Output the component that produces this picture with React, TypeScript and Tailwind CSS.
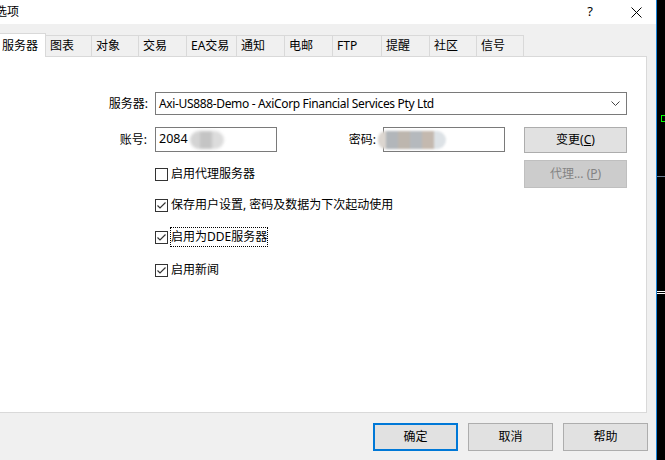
import type { ReactNode } from 'react'

const tabs = [
  { label: '图表', w: 'w-[47px]' },
  { label: '对象', w: 'w-[48px]' },
  { label: '交易', w: 'w-[49px]' },
  { label: 'EA交易', w: 'w-[51px]' },
  { label: '通知', w: 'w-[49px]' },
  { label: '电邮', w: 'w-[49px]' },
  { label: 'FTP', w: 'w-[50px]' },
  { label: '提醒', w: 'w-[49px]' },
  { label: '社区', w: 'w-[48px]' },
  { label: '信号', w: 'w-[48px]' },
]

function Checkbox({ checked, focused, children }: { checked?: boolean; focused?: boolean; children: ReactNode }) {
  return (
    <div className="flex items-center h-[20px] pl-[155px]">
      <div className="w-[13px] h-[13px] border border-[#333333] bg-white flex items-center justify-center">
        {checked && (
          <svg width="11" height="11" viewBox="0 0 11 11">
            <polyline points="1.5,5.5 4,8 9.5,2.5" fill="none" stroke="#333333" strokeWidth="1.2" />
          </svg>
        )}
      </div>
      <span
        className={
          'ml-[2px] border leading-[18px] text-[12px] text-[#000]' +
          (focused ? ' border-dotted border-black' : ' border-transparent')
        }
      >
        {children}
      </span>
    </div>
  )
}

function Button({
  children,
  focused,
  disabled,
  className = '',
}: {
  children: ReactNode
  focused?: boolean
  disabled?: boolean
  className?: string
}) {
  return (
    <div
      className={
        'flex items-center justify-center text-[12px] ' +
        (focused
          ? 'border-2 border-[#0078d7] bg-[#e1e1e1] text-black '
          : disabled
            ? 'border border-[#bfbfbf] bg-[#cccccc] text-[#838383] '
            : 'border border-[#adadad] bg-[#e1e1e1] text-black ') +
        className
      }
    >
      {children}
    </div>
  )
}

export default function App() {
  return (
    <div
      className="w-[665px] h-[460px] flex bg-black overflow-hidden"
      style={{ fontFamily: '"Noto Sans", "Noto Sans CJK SC", sans-serif' }}
    >
      <div className="w-[656px] h-full flex flex-col bg-[#f0f0f0]">
        {/* title bar */}
        <div className="h-[24px] bg-white flex items-center shrink-0">
          <span className="-ml-[5px] text-[12px] text-black">选项</span>
          <span className="ml-auto text-[13px] text-black mr-[38px]">?</span>
          <svg width="11" height="11" viewBox="0 0 11 11" className="mr-[14px]">
            <path d="M0.5 0.5 L10.5 10.5 M10.5 0.5 L0.5 10.5" stroke="#000" strokeWidth="1" />
          </svg>
        </div>

        <div className="flex-1 flex flex-col pt-[9px]">
          {/* tabs */}
          <div className="h-[23px] flex items-end shrink-0">
            <div className="relative z-10 -ml-[2px] w-[48px] h-[24px] -mb-px bg-white border-t border-r border-[#d9d9d9] flex items-center pl-[4px] text-[12px] text-black">
              服务器
            </div>
            {tabs.map((t) => (
              <div
                key={t.label}
                className={`${t.w} h-[21px] -ml-px bg-[#f0f0f0] border-t border-l border-r border-[#d9d9d9] flex items-center pl-[4px] text-[12px] text-black`}
              >
                {t.label}
              </div>
            ))}
          </div>

          {/* panel */}
          <div className="-ml-px w-[648px] h-[357px] bg-white border border-[#d9d9d9] pt-[35px] shrink-0">
            <div className="flex items-center h-[23px]">
              <div className="w-[148px] text-right text-[12px] text-black">服务器:</div>
              <div className="ml-[7px] w-[472px] h-[23px] border border-[#7a7a7a] flex items-center pl-[3px] pr-[6px] text-[12px] text-black tracking-[-0.35px]">
                Axi-US888-Demo - AxiCorp Financial Services Pty Ltd
                <svg width="9" height="6" viewBox="0 0 9 6" className="ml-auto">
                  <polyline points="0.5,0.5 4.5,4.5 8.5,0.5" fill="none" stroke="#444" strokeWidth="1" />
                </svg>
              </div>
            </div>

            <div className="flex items-start mt-[12px] w-[627px]">
              <div className="w-[147px] h-[25px] flex items-center justify-end text-[12px] text-black">账号:</div>
              <div className="relative ml-[8px] w-[122px] h-[25px] border border-[#7a7a7a] flex items-center pl-[3px] text-[12.5px] text-black">
                2084
                <div className="absolute left-[34px] top-[3px] flex blur-[1.5px]">
                  <div className="w-[10px] h-[18px] bg-[#d4d4d4] rounded-l-full" />
                  <div className="w-[12px] h-[18px] bg-[#c4c4c4]" />
                  <div className="w-[12px] h-[18px] bg-[#dcdcdc] rounded-r-full" />
                </div>
              </div>
              <div className="w-[106px] h-[25px] flex items-center justify-end text-[12px] text-black">
                <span className="mr-[7px]">密码:</span>
              </div>
              <div className="relative w-[122px] h-[25px] border border-[#7a7a7a]">
                <div className="absolute -left-[6px] top-[3px] flex blur-[1px]">
                  <div className="w-[8px] h-[18px] bg-[#dcd6d0] rounded-l-full" />
                  <div className="w-[12px] h-[18px] bg-[#b2b6ba]" />
                  <div className="w-[12px] h-[18px] bg-[#bdb6ae]" />
                  <div className="w-[12px] h-[18px] bg-[#b5b9bd]" />
                  <div className="w-[12px] h-[18px] bg-[#c4b9af]" />
                  <div className="w-[12px] h-[18px] bg-[#dde2e6] rounded-r-full" />
                </div>
              </div>
              <Button className="ml-auto w-[103px] h-[26px]">
                <span>
                  变更(<span className="underline">C</span>)
                </span>
              </Button>
            </div>

            <div className="flex items-center mt-[7px] w-[627px] h-[28px]">
              <Checkbox>启用代理服务器</Checkbox>
              <Button disabled className="ml-auto w-[103px] h-[28px]">
                <span>
                  代理... (<span className="underline">P</span>)
                </span>
              </Button>
            </div>

            <div className="mt-[7px]">
              <Checkbox checked>保存用户设置, 密码及数据为下次起动使用</Checkbox>
            </div>
            <div className="mt-[12px]">
              <Checkbox checked focused>
                启用为DDE服务器
              </Checkbox>
            </div>
            <div className="mt-[13px]">
              <Checkbox checked>启用新闻</Checkbox>
            </div>
          </div>

          {/* bottom buttons */}
          <div className="flex justify-end gap-[10px] pr-[8px] mt-[10px]">
            <Button focused className="w-[85px] h-[28px]">
              确定
            </Button>
            <Button className="w-[85px] h-[28px]">取消</Button>
            <Button className="w-[85px] h-[28px]">帮助</Button>
          </div>
        </div>
      </div>

      <div className="w-px bg-[#1883d7]" />

      {/* chart window behind the dialog */}
      <div className="flex-1 relative">
        <div className="absolute left-[4px] top-[115px] w-[6px] h-[7px] border border-[#00ff00]" />
        <div className="absolute left-0 right-0 top-[176px] h-px bg-[#6a7a90]" />
        <div className="absolute left-0 right-0 top-[291px] h-px bg-white" />
        <div className="absolute left-0 right-0 top-[293px] h-px bg-white" />
      </div>
    </div>
  )
}
